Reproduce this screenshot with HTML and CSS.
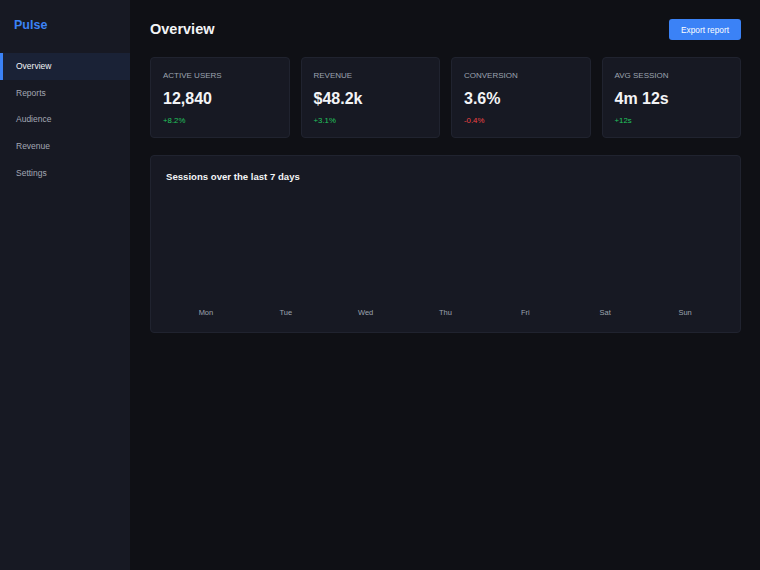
FILE: index.html
```html
<!DOCTYPE html>
<html lang="en">
<head>
    <meta charset="UTF-8">
    <meta name="viewport" content="width=device-width, initial-scale=1.0">
    <title>Pulse - Overview</title>
    <link rel="stylesheet" href="styles.css">
</head>
<body>
<div class="app">
    <aside class="sidebar">
        <div class="logo">Pulse</div>
        <nav>
            <a class="nav-item active" href="#">Overview</a>
            <a class="nav-item" href="#">Reports</a>
            <a class="nav-item" href="#">Audience</a>
            <a class="nav-item" href="#">Revenue</a>
            <a class="nav-item" href="#">Settings</a>
        </nav>
    </aside>

    <main class="main">
        <header class="page-header">
            <h1>Overview</h1>
            <button class="btn-primary">Export report</button>
        </header>

        <!-- Stat cards -->
        <section class="stats">
            <div class="card stat">
                <div class="stat-label">Active users</div>
                <div class="stat-value">12,840</div>
                <div class="stat-change up">+8.2%</div>
            </div>
            <div class="card stat">
                <div class="stat-label">Revenue</div>
                <div class="stat-value">$48.2k</div>
                <div class="stat-change up">+3.1%</div>
            </div>
            <div class="card stat">
                <div class="stat-label">Conversion</div>
                <div class="stat-value">3.6%</div>
                <div class="stat-change down">-0.4%</div>
            </div>
            <div class="card stat">
                <div class="stat-label">Avg session</div>
                <div class="stat-value">4m 12s</div>
                <div class="stat-change up">+12s</div>
            </div>
        </section>

        <!-- Sessions chart -->
        <section class="card chart-card">
            <h2>Sessions over the last 7 days</h2>
            <div class="chart">
                <div class="col"><div class="bar-track"><div class="bar"></div></div><span>Mon</span></div>
                <div class="col"><div class="bar-track"><div class="bar"></div></div><span>Tue</span></div>
                <div class="col"><div class="bar-track"><div class="bar"></div></div><span>Wed</span></div>
                <div class="col"><div class="bar-track"><div class="bar"></div></div><span>Thu</span></div>
                <div class="col"><div class="bar-track"><div class="bar"></div></div><span>Fri</span></div>
                <div class="col"><div class="bar-track"><div class="bar"></div></div><span>Sat</span></div>
                <div class="col"><div class="bar-track"><div class="bar"></div></div><span>Sun</span></div>
            </div>
        </section>
    </main>
</div>
</body>
</html>
```

FILE: styles.css
```css
* { box-sizing: border-box; }
body { margin: 0; background: #0f1015; color: #f3f4f6; font-family: "Liberation Sans", Arial, sans-serif; }
.app { display: flex; min-height: 570px; }

/* sidebar */
.sidebar { width: 130px; flex-shrink: 0; background: #171923; padding-top: 18px; }
.logo { color: #3b82f6; font-size: 12.5px; font-weight: bold; line-height: 14px; padding-left: 14px; margin-bottom: 21px; }
.nav-item { display: block; padding: 8px 16px 8px 13px; font-size: 8.5px; line-height: 10.7px; color: #a3a7b3; text-decoration: none; border-left: 3px solid transparent; }
.nav-item.active { background: #1a2236; color: #f3f4f6; border-left-color: #3b82f6; }

/* main */
.main { flex: 1; padding: 19px 19px 19px 20px; }
.page-header { display: flex; justify-content: space-between; align-items: center; margin-bottom: 17px; }
.page-header h1 { margin: 0; font-size: 14.5px; line-height: 21px; font-weight: bold; }
.btn-primary { height: 21px; padding: 0 12px; background: #3b82f6; color: #fff; border: none; border-radius: 3px; font-family: inherit; font-size: 8.3px; cursor: pointer; }
.btn-primary:hover { background: #2563eb; }

.card { background: #171923; border: 1px solid #20232f; border-radius: 4px; }
.stats { display: grid; grid-template-columns: repeat(4, 1fr); gap: 11px; margin-bottom: 17px; }
.stat { padding: 13px 12px 11px; }
.stat-label { font-size: 8px; line-height: 10px; color: #9ca3af; text-transform: uppercase; }
.stat-value { font-size: 16px; line-height: 20px; font-weight: bold; margin-top: 8px; }
.stat-change { font-size: 7.8px; line-height: 10px; margin-top: 7px; }
.stat-change.up { color: #22c55e; }
.stat-change.down { color: #ef4444; }

.chart-card { padding: 15px; }
.chart-card h2 { margin: 0; font-size: 9.6px; line-height: 12px; font-weight: bold; }
.chart { display: flex; }
.col { flex: 1; display: flex; flex-direction: column; align-items: center; }
.bar-track { height: 119px; width: 100%; display: flex; align-items: flex-end; justify-content: center; }
.bar { width: 60%; background: #3b82f6; border-radius: 2px 2px 0 0; }
.col span { margin-top: 6px; font-size: 7.5px; line-height: 9px; color: #9ca3af; }
```
